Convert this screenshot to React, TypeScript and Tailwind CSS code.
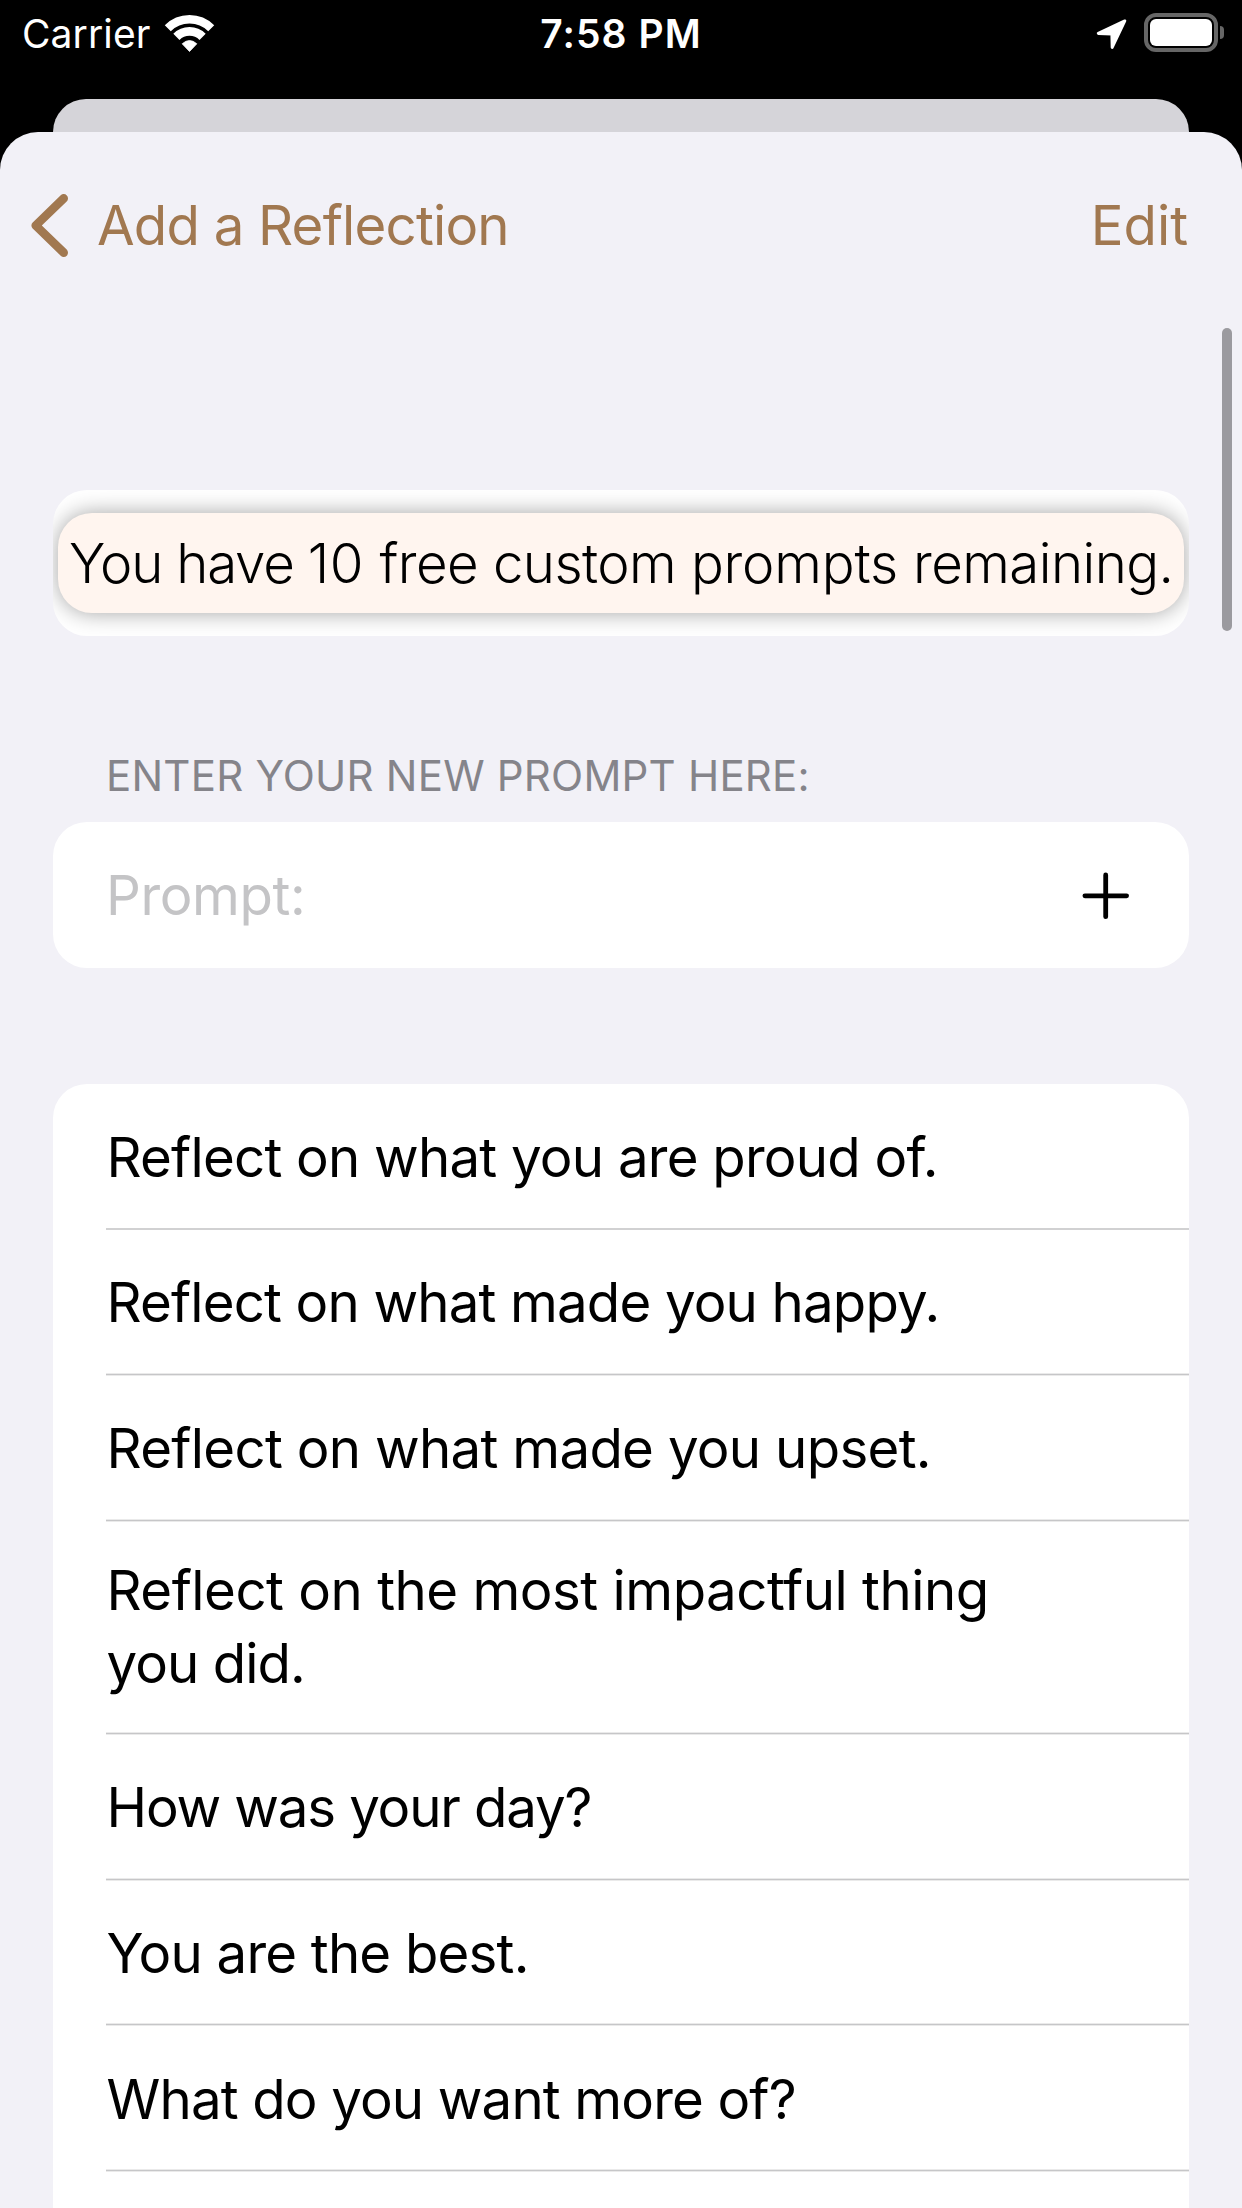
type Line = { text: string; tracking: string };
type Prompt = { lines: Line[]; row: string; divider: string };

const SOFT = 'h-[3px] border-y border-[#eaeaea] bg-[#c6c6c8]';
const SOLID = 'h-[2px] bg-[#d1d1d2]';

const prompts: Prompt[] = [
  { lines: [{ text: 'Reflect on what you are proud of.', tracking: 'tracking-[-0.78px]' }], row: 'h-[146px] pt-[37px] leading-[72px]', divider: SOLID },
  { lines: [{ text: 'Reflect on what made you happy.', tracking: 'tracking-[-0.84px]' }], row: 'h-[146px] pt-9 leading-[72px]', divider: SOFT },
  { lines: [{ text: 'Reflect on what made you upset.', tracking: 'tracking-[-0.7px]' }], row: 'h-[146px] pt-9 leading-[72px]', divider: SOFT },
  {
    lines: [
      { text: 'Reflect on the most impactful thing', tracking: 'tracking-[-0.5px]' },
      { text: 'you did.', tracking: 'tracking-[-0.95px]' },
    ],
    row: 'h-[213px] pt-8 leading-[73px]',
    divider: SOFT,
  },
  { lines: [{ text: 'How was your day?', tracking: 'tracking-[-1.15px]' }], row: 'h-[146px] pt-9 leading-[72px]', divider: SOFT },
  { lines: [{ text: 'You are the best.', tracking: 'tracking-[-0.8px]' }], row: 'h-[145px] pt-9 leading-[72px]', divider: SOFT },
  { lines: [{ text: 'What do you want more of?', tracking: 'tracking-[-0.85px]' }], row: 'h-[146px] pt-[37px] leading-[72px]', divider: SOFT },
];

function WifiIcon() {
  return (
    <svg width="52" height="40" viewBox="163 14 52 40" fill="none">
      <path d="M167.77 28.27A30.73 30.73 0 0 1 211.23 28.27" stroke="#fff" strokeWidth="8.5" />
      <path d="M176.4 36.9A18.5 18.5 0 0 1 202.6 36.9" stroke="#fff" strokeWidth="8.7" />
      <path d="M189.5 51.5L182.2 43.8Q189.5 37.2 196.8 43.8Z" fill="#fff" stroke="#fff" strokeWidth="0.8" strokeLinejoin="round" />
    </svg>
  );
}

function LocationIcon() {
  return (
    <svg width="32" height="32" viewBox="1095 18 32 32">
      <path d="M1124.8 20.9L1098.3 33.4L1111.9 34L1112.2 47.4Z" fill="#fff" stroke="#fff" strokeWidth="3" strokeLinejoin="round" />
    </svg>
  );
}

function BatteryIcon() {
  return (
    <div className="flex items-center">
      <div className="h-[39px] w-[74px] rounded-[12px] border-[4px] border-[#666] p-[2px]">
        <div className="h-[27px] w-[62px] rounded-[6px] bg-white" />
      </div>
      <div className="ml-[2px] h-[13px] w-1 rounded-r-full bg-[#666]" />
    </div>
  );
}

function StatusBar() {
  return (
    <div className="grid h-[99px] grid-cols-3 items-start text-[39px] leading-[47px] text-white">
      <div className="flex pl-[22px] pt-[10px]">
        <span className="w-[127px] tracking-[0.1px]">Carrier</span>
        <span className="ml-[14px] mt-1"><WifiIcon /></span>
      </div>
      <div className="pt-[10px] text-center font-semibold tracking-[1.1px]">7:58 PM</div>
      <div className="flex items-start justify-end pr-[18px]">
        <span className="mr-[17px] mt-[18px]"><LocationIcon /></span>
        <span className="mt-[13px]"><BatteryIcon /></span>
      </div>
    </div>
  );
}

export default function App() {
  return (
    <div className="relative flex h-[2208px] w-[1242px] flex-col overflow-hidden bg-black font-['Inter',sans-serif] text-[54.6px]">
      <StatusBar />
      <div className="mx-[53px] h-[33px] shrink-0 rounded-t-[33px] bg-[#d5d4d9]" />
      <main className="flex flex-1 flex-col rounded-t-[38px] bg-[#f2f1f7]">
        <header className="flex h-[358px] shrink-0 items-start pl-[30px] pr-[54px] pt-[60px] leading-[66px] text-[#a17850]">
          <svg className="mt-px" width="40" height="65" viewBox="30 193 40 65" fill="none">
            <path d="M63.7 198.4L35.7 225.5L63.7 252.7" stroke="currentColor" strokeWidth="8.6" strokeLinecap="round" strokeLinejoin="round" />
          </svg>
          <span className="ml-[27px] tracking-[-0.8px]">Add a Reflection</span>
          <span className="ml-auto">Edit</span>
        </header>

        <section className="mx-[53px] h-[146px] shrink-0 overflow-hidden rounded-[34px] bg-white px-[5px] pt-[23px]">
          <div className="h-[100px] rounded-[34px] bg-[#fff5ef] pl-[11px] pt-[17px] font-light leading-[66px] tracking-[-0.57px] whitespace-pre text-black shadow-[0_0_22px_rgba(0,0,0,0.36)]">
            <span className="tracking-[-1.2px]">You have </span>
            <span className="tracking-[0.4px]">10 </span>
            {'free custom '}
            <span className="tracking-[-0.2px]">prompts </span>
            {'remaining.'}
          </div>
        </section>

        <h2 className="ml-[106px] mt-[114px] shrink-0 text-[42px] leading-[51px] tracking-[0.22px] text-[#85848a]">
          ENTER YOUR NEW PROMPT HERE:
        </h2>

        <section className="mx-[53px] mt-[21px] flex h-[146px] shrink-0 items-start justify-between rounded-[34px] bg-white pl-[53px] pr-[58px] pt-[37px]">
          <span className="leading-[72px] tracking-[-0.4px] text-[#c4c4c6]">Prompt:</span>
          <svg className="mt-[11px]" width="50" height="50" viewBox="0 0 50 50" fill="none">
            <path d="M24.7 4.9V46.7M3.9 25.8H45.6" stroke="#000" strokeWidth="4.8" strokeLinecap="round" />
          </svg>
        </section>

        <ul className="mx-[53px] mt-[116px] flex-1 rounded-t-[34px] bg-white pl-[53px] text-black">
          {prompts.map((p) => (
            <li key={p.lines[0].text} className={`flex flex-col justify-between ${p.row}`}>
              <div className="pl-[0.5px]">
                {p.lines.map((line) => (
                  <div key={line.text} className={line.tracking}>{line.text}</div>
                ))}
              </div>
              <div className={p.divider} />
            </li>
          ))}
        </ul>
      </main>
      <div className="absolute right-[10px] top-[328px] h-[303px] w-[10px] rounded-full bg-[#9b9a9f]" />
    </div>
  );
}
